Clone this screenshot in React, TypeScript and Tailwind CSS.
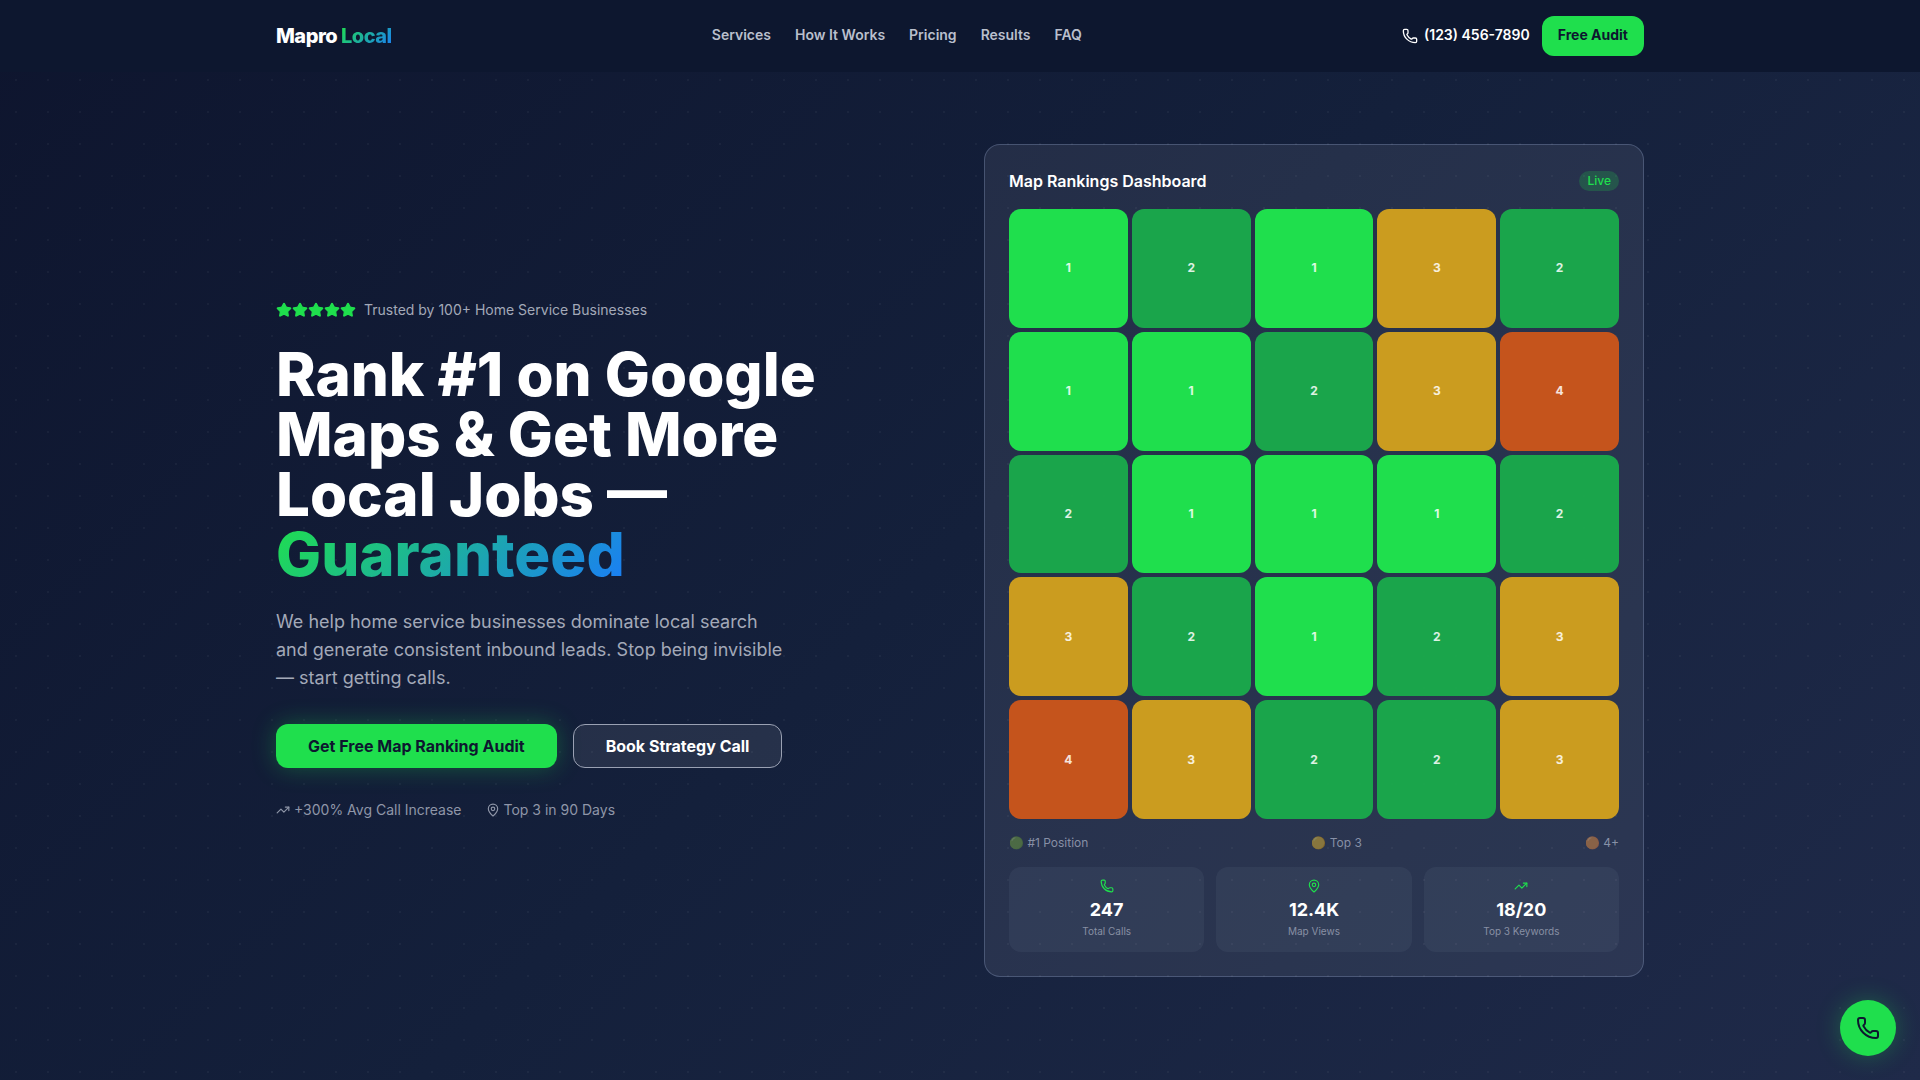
import React from "react";
import { MapPin, Phone, Star, TrendingUp } from "lucide-react";

const navLinks = ["Services", "How It Works", "Pricing", "Results", "FAQ"];

const rankings = [
  1, 2, 1, 3, 2,
  1, 1, 2, 3, 4,
  2, 1, 1, 1, 2,
  3, 2, 1, 2, 3,
  4, 3, 2, 2, 3,
];

const rankColors: Record<number, string> = {
  1: "bg-[#1fdf4d]",
  2: "bg-[#1ba74b]/98",
  3: "bg-[#cb9c1f]",
  4: "bg-[#c5541c]",
};

const legend = [
  { dot: "🟢", label: "#1 Position", tone: "brightness-90" },
  { dot: "🟡", label: "Top 3", tone: "brightness-90" },
  { dot: "🟠", label: "4+", tone: "-hue-rotate-15 saturate-75" },
];

const stats = [
  { icon: Phone, value: "247", label: "Total Calls" },
  { icon: MapPin, value: "12.4K", label: "Map Views" },
  { icon: TrendingUp, value: "18/20", label: "Top 3 Keywords" },
];

function Header() {
  return (
    <header className="fixed inset-x-0 top-0 z-40 bg-[#0d172f]">
      <div className="mx-auto flex h-18 max-w-[1400px] items-center justify-between px-4">
        <a href="#" className="text-xl font-extrabold tracking-tight text-white">
          Mapro{" "}
          <span className="bg-linear-135/srgb from-[#1fdf4d] to-[#1a7cf9] bg-clip-text text-transparent">Local</span>
        </a>
        <nav className="flex items-center gap-6 pb-0.5">
          {navLinks.map((label) => (
            <a key={label} href="#" className="text-sm font-semibold text-[#b9bfcc]">
              {label}
            </a>
          ))}
        </nav>
        <div className="flex items-center gap-3">
          <a href="tel:1234567890" className="flex items-center gap-1.5 text-sm font-semibold text-white">
            <Phone className="size-4" />
            <span className="pb-0.5">(123) 456-7890</span>
          </a>
          <button type="button" className="h-10 rounded-xl bg-[#1fdf4d] px-4 pb-0.5 text-sm font-bold text-[#0d172f]">
            Free Audit
          </button>
        </div>
      </div>
    </header>
  );
}

function Pitch() {
  return (
    <div className="pb-0.5">
      <div className="mb-6 flex items-center gap-2">
        <div className="flex">
          {[0, 1, 2, 3, 4].map((i) => (
            <Star key={i} className="size-4 fill-[#1fdf4d] text-[#1fdf4d]" />
          ))}
        </div>
        <span className="text-sm text-[#a3a9b8]">Trusted by 100+ Home Service Businesses</span>
      </div>
      <h1 className="mb-6 text-6xl leading-none font-extrabold text-white">
        Rank #1 on Google Maps &amp; Get More Local Jobs —{" "}
        <span className="bg-linear-135/srgb from-[#1fdf4d] to-[#1a7cf9] bg-clip-text text-transparent">Guaranteed</span>
      </h1>
      <p className="mb-8 max-w-lg text-lg leading-7 text-[#a3a9b8]">
        We help home service businesses dominate local search and generate consistent inbound leads. Stop being
        invisible — start getting calls.
      </p>
      <div className="mb-8 flex gap-4">
        <button
          type="button"
          className="h-11 rounded-xl bg-[#1fdf4d] px-8 font-bold text-[#0d172f] shadow-[0_0_24px_rgba(31,223,77,0.3)]"
        >
          Get Free Map Ranking Audit
        </button>
        <button
          type="button"
          className="h-11 rounded-xl border border-[#9aa1b3] bg-white/8 px-8 font-bold text-white"
        >
          Book Strategy Call
        </button>
      </div>
      <div className="flex gap-6 text-sm text-[#8f96a8]">
        <span className="flex items-center gap-1">
          <TrendingUp className="size-3.5" />
          +300% Avg Call Increase
        </span>
        <span className="flex items-center gap-1">
          <MapPin className="size-3.5" />
          Top 3 in 90 Days
        </span>
      </div>
    </div>
  );
}

function Dashboard() {
  return (
    <div className="rounded-2xl border border-[#8a9ac0]/35 bg-[#f0f4ff]/8 p-6">
      <div className="mb-4 flex items-center justify-between">
        <h2 className="leading-6 font-semibold text-white">Map Rankings Dashboard</h2>
        <span className="rounded-full bg-[#1fdf4d]/20 px-2 py-0.5 text-xs font-medium text-[#1fdf4d]">Live</span>
      </div>
      <div className="grid grid-cols-5 gap-1">
        {rankings.map((rank, i) => (
          <div
            key={i}
            className={`flex aspect-square items-center justify-center rounded-xl text-xs font-bold text-white/85 ${rankColors[rank]}`}
          >
            {rank}
          </div>
        ))}
      </div>
      <div className="mt-4 flex justify-between text-xs text-[#a8b0c4]/75">
        {legend.map(({ dot, label, tone }) => (
          <span key={label}>
            <span className={`inline-block text-white/50 ${tone}`}>{dot}</span> {label}
          </span>
        ))}
      </div>
      <div className="mt-4 grid grid-cols-3 gap-3">
        {stats.map(({ icon: Icon, value, label }) => (
          <div key={label} className="flex flex-col items-center rounded-xl bg-[#dfe6ff]/5 px-3 pt-3 pb-[13px]">
            <Icon className="mb-[3px] size-3.5 text-[#1fdf4d]" />
            <div className="text-lg leading-7 font-bold text-white">{value}</div>
            <div className="text-[10px] leading-[15px] text-[#8890a4]">{label}</div>
          </div>
        ))}
      </div>
    </div>
  );
}

export default function App() {
  return (
    <div className="min-h-screen bg-linear-135/srgb from-[#0e152e] via-[#14203b] to-[#1f2a49] font-[Inter,sans-serif]">
      <Header />
      <main className="min-h-screen bg-[radial-gradient(circle,rgba(255,255,255,0.04)_1px,transparent_1px)] bg-size-[32px_32px] pt-36 pb-16">
        <div className="mx-auto grid max-w-[1400px] grid-cols-2 items-center gap-12 px-4">
          <Pitch />
          <Dashboard />
        </div>
      </main>
      <a
        href="tel:1234567890"
        aria-label="Call us"
        className="fixed right-6 bottom-6 z-50 flex size-14 items-center justify-center rounded-full bg-[#1fdf4d] text-[#0d172f] shadow-[0_0_24px_rgba(31,223,77,0.3)]"
      >
        <Phone className="size-6" />
      </a>
    </div>
  );
}
